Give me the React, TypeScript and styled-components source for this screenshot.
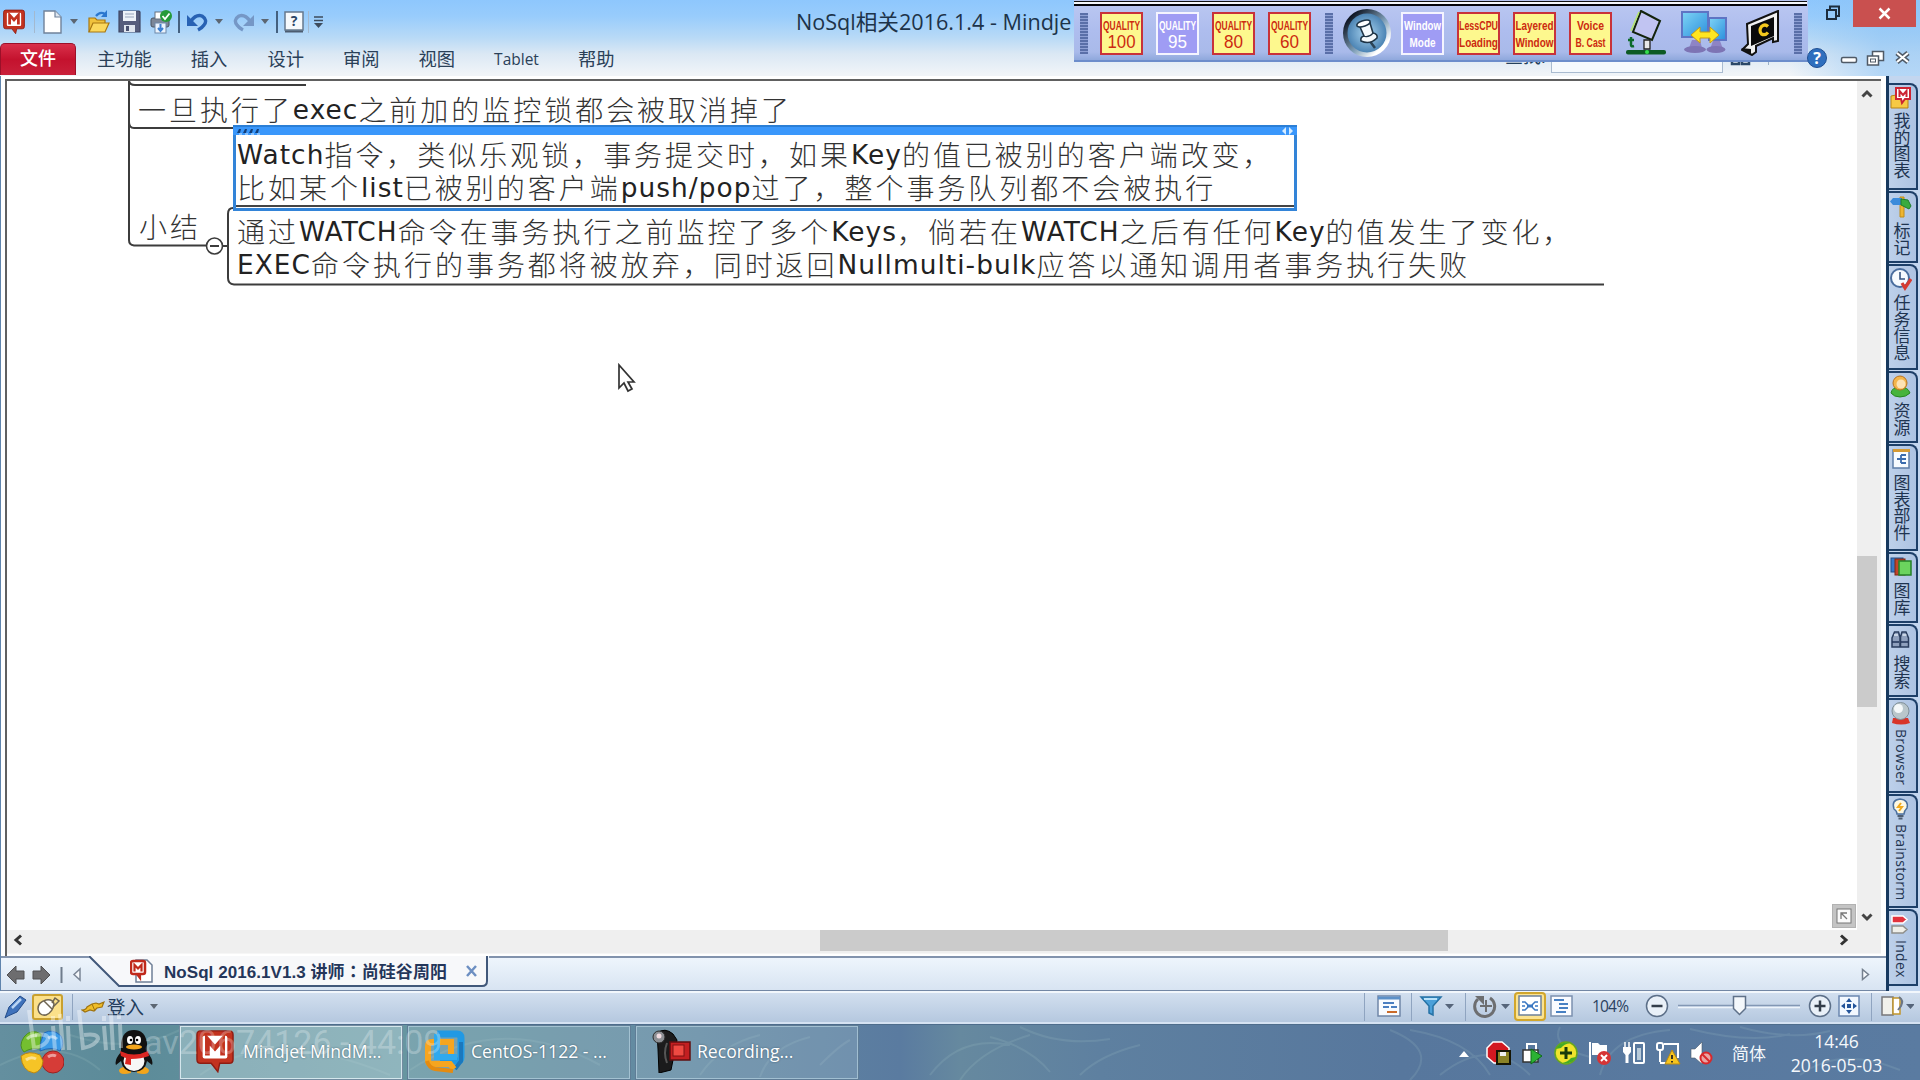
import React from "react";
import styled, { createGlobalStyle, css } from "styled-components";

const UI = `"Open Sans", "Noto Sans CJK SC", sans-serif`;

const Global = createGlobalStyle`
  * { box-sizing: border-box; }
  html, body { margin: 0; padding: 0; overflow: hidden; }
  body { font-family: ${UI}; background: #fff; }
  svg { display: block; flex: none; }
`;

const Screen = styled.div`
  position: relative;
  width: 1920px;
  height: 1080px;
  overflow: hidden;
  display: flex;
  flex-direction: column;
  background: #fff;
`;

/* ---------- header ---------- */
const Header = styled.header`
  height: 76px;
  flex: none;
  display: flex;
  flex-direction: column;
  background:
    linear-gradient(90deg, rgba(140, 195, 245, 0) 1790px, rgba(140, 195, 245, 0.6) 1880px),
    linear-gradient(#8ec7fd 0, #98ccfc 16px, #b9daf6 38px, #dbe8f4 54px, #f0f4f8 74px);
`;

const TitleRow = styled.div`
  height: 43px;
  flex: none;
  display: flex;
  align-items: center;
  padding-left: 3px;
`;

const QuickBar = styled.div`
  display: flex;
  align-items: center;
  height: 44px;
  width: 793px;
`;

const Gap = styled.span<{ $w: number }>`
  width: ${(p) => p.$w}px;
  flex: none;
`;

const VLine = styled.span<{ $c?: string; $h?: number; $w?: number }>`
  width: ${(p) => p.$w ?? 2}px;
  height: ${(p) => p.$h ?? 22}px;
  flex: none;
  background: ${(p) => p.$c ?? "#44607f"};
`;

const Caret = styled.span<{ $c?: string }>`
  width: 0;
  height: 0;
  flex: none;
  border: 4px solid transparent;
  border-top: 5px solid ${(p) => p.$c ?? "#5c6672"};
  border-bottom: 0;
`;

const WindowTitle = styled.div`
  width: 278px;
  overflow: hidden;
  font-size: 21.6px;
  line-height: 43px;
  color: #1d3349;
  white-space: nowrap;
`;

const RibbonRow = styled.nav`
  height: 32px;
  flex: none;
  display: flex;
  align-items: stretch;
`;

const FileTab = styled.div`
  width: 76px;
  border-radius: 5px 5px 0 0;
  border: 1px solid #9b1029;
  border-bottom: 0;
  background: linear-gradient(#d9304a, #c4122e 50%, #c9203a);
  color: #fff;
  font-weight: 500;
  font-size: 18px;
  line-height: 29px;
  text-align: center;
`;

const RibbonTab = styled.div<{ $left: number; $small?: boolean }>`
  margin-left: ${(p) => p.$left}px;
  font-size: ${(p) => (p.$small ? 15.5 : 18.3)}px;
  line-height: 32px;
  color: #2a4058;
  white-space: nowrap;
`;

const WindowKeys = styled.div`
  position: absolute;
  top: 0;
  right: 0;
  width: 113px;
  height: 76px;
`;

const CloseKey = styled.div`
  position: absolute;
  left: 46px;
  top: 0;
  width: 63px;
  height: 27px;
  background: #c9504f;
  display: flex;
  align-items: center;
  justify-content: center;
`;

const HiddenSearch = styled.div`
  position: absolute;
  left: 1505px;
  top: 44px;
  height: 29px;
  display: flex;
  align-items: flex-start;
  font-size: 18px;
  line-height: 24px;
  color: #24405c;
`;

const SearchInput = styled.div`
  margin-left: 5px;
  width: 172px;
  height: 29px;
  border: 1px solid #a9bbd0;
  background: #f5f9fd;
`;

/* ---------- recorder toolbar (floats over the header) ---------- */
const Recorder = styled.div`
  position: absolute;
  left: 1074px;
  top: 0;
  width: 734px;
  height: 62px;
  display: flex;
  align-items: center;
  padding: 6px 6px 0 6px;
  border-bottom: 2px solid #6c8dcb;
  background: linear-gradient(#b9c6f1 6px, #aebdee 30px, #a9baea 52px, #8fa8dc 60px);
`;

const RecorderEdge = styled.div`
  position: absolute;
  left: 0;
  top: 1px;
  width: 733px;
  height: 5px;
  background: #f4f6fb;
  border-top: 1px solid #111;
  border-bottom: 2px solid #06060c;
`;

const Grip = styled.div`
  width: 8px;
  height: 41px;
  flex: none;
  background: repeating-linear-gradient(#5a6fa8 0 2px, #8fa0d4 2px 3px);
`;

const Chip = styled.svg<{ $left: number }>`
  margin-left: ${(p) => p.$left}px;
`;

type ChipProps = { left?: number; top: string; bottom: string; on?: boolean; number?: boolean; w1?: number; w2?: number };
const LabelChip = ({ left = 13, top, bottom, on, number, w1 = 37, w2 = 30 }: ChipProps) => {
  const ink = on ? "#fff" : "#cc2a10";
  return (
    <Chip $left={left} width="43" height="43" viewBox="0 0 43 43">
      <rect x="1" y="1" width="41" height="41" fill={on ? "#9f9cf4" : "#fdf88e"} stroke={on ? "#f4f4ff" : "#c8323a"} strokeWidth="2" />
      <text x="21.5" y="17.500" textAnchor="middle" textLength={w1} lengthAdjust="spacingAndGlyphs" fontFamily="Liberation Sans Narrow, Liberation Sans, sans-serif" fontWeight="700" fontSize="12.500" fill={ink}>{top}</text>
      {number ? (
        <text x="21.5" y="36" textAnchor="middle" textLength={w2} lengthAdjust="spacingAndGlyphs" fontFamily="Liberation Sans, sans-serif" fontSize="19" fill={ink}>{bottom}</text>
      ) : (
        <text x="21.5" y="34.500" textAnchor="middle" textLength={w2} lengthAdjust="spacingAndGlyphs" fontFamily="Liberation Sans Narrow, Liberation Sans, sans-serif" fontWeight="700" fontSize="12.500" fill={ink}>{bottom}</text>
      )}
    </Chip>
  );
};

/* ---------- middle area ---------- */
const Middle = styled.div`
  height: 915px;
  flex: none;
  display: flex;
`;

const DocArea = styled.div`
  width: 1886px;
  flex: none;
  display: flex;
  flex-direction: column;
  border-left: 1px solid #5f84ad;
`;

const Pane = styled.div`
  height: 877px;
  margin-top: 3px;
  margin-left: 4px;
  width: 1876px;
  flex: none;
  display: grid;
  grid-template-columns: 1850px 24px;
  grid-template-rows: 849px 24px;
  border-left: 2px solid #606060;
  border-top: 2px solid #606060;
`;

const Canvas = styled.main`
  position: relative;
  overflow: hidden;
  background: #fff;
`;

const CanvasLines = styled.svg`
  position: absolute;
  left: -7px;
  top: -81px;
`;

const VScroll = styled.div`
  background: #efefef;
  display: flex;
  flex-direction: column;
  align-items: center;
  padding: 8px 4px 8px 0;
`;

const VThumb = styled.div`
  width: 20px;
  height: 151px;
  margin: 457px 0 auto;
  flex: none;
  background: #cbcbcb;
`;

const HScroll = styled.div`
  grid-column: 1 / 3;
  background: #efefef;
  display: flex;
  align-items: flex-start;
  border-bottom: 1px solid #f6f6f6;
`;

const HThumb = styled.div`
  width: 628px;
  height: 21px;
  margin-left: 791px;
  background: #cbcbcb;
`;

const Topic = styled.div<{ $x: number; $y: number }>`
  position: absolute;
  left: ${(p) => p.$x - 7}px;
  top: ${(p) => p.$y - 81}px;
`;

const TopicLine = styled.div`
  height: 33.3px;
  line-height: 33.3px;
  display: flex;
  align-items: center;
  white-space: nowrap;
  color: #222;
`;

const Latin = styled.span`
  font-family: "DejaVu Sans", sans-serif;
  font-size: 26.4px;
  letter-spacing: 1.05px;
`;

const Han = styled.span`
  font-family: "Noto Sans CJK SC", sans-serif;
  font-weight: 300;
  font-size: 28px;
  letter-spacing: 2.97px;
  color: #333;
`;

const Line = ({ text }: { text: string }) => (
  <TopicLine>
    {(text.match(/[\x20-\x7e]+|[^\x20-\x7e]+/g) ?? []).map((run, i) =>
      /[\x20-\x7e]/.test(run) ? <Latin key={i}>{run}</Latin> : <Han key={i}>{run}</Han>
    )}
  </TopicLine>
);

const Selection = styled.div`
  position: absolute;
  left: 226px;
  top: 44px;
  width: 1064px;
  height: 86px;
  border: 3px solid #3384d8;
  border-top: 0;
  background: #fff;
`;

const SelectionBar = styled.div`
  height: 10px;
  margin: 0 -3px;
  background: #3a97fb;
  border-top: 2px solid #2b7fd6;
  display: flex;
  justify-content: space-between;
  align-items: center;
  padding: 0 3px;
`;

const SelectionRule = styled.div`
  position: absolute;
  left: 0;
  right: 0;
  bottom: 1px;
  height: 2px;
  background: #444;
`;

const CornerKey = styled.div`
  position: absolute;
  right: 1px;
  bottom: 2px;
  width: 24px;
  height: 24px;
  background: #c4c4c4;
  border: 1px solid #b2b2b2;
  display: flex;
  align-items: center;
  justify-content: center;
`;

const DocTabs = styled.div`
  height: 35px;
  flex: none;
  display: flex;
  align-items: flex-start;
  border-bottom: 1px solid #7387a4;
  background: linear-gradient(#eff6fd, #d8e4f2);
  position: relative;
`;

const DocTabNav = styled.div`
  width: 88px;
  height: 35px;
  flex: none;
  display: flex;
  align-items: center;
  padding-left: 5px;
  border-top: 2px solid #8293ad;
`;

const DocTab = styled.div`
  position: relative;
  width: 400px;
  height: 33px;
  flex: none;
  display: flex;
  align-items: center;
  padding: 0 0 4px 41px;
`;

const DocTabShape = styled.svg`
  position: absolute;
  left: 0;
  top: 0;
`;

const DocTabLabel = styled.span`
  position: relative;
  margin-left: 11px;
  width: 289px;
  white-space: nowrap;
  font-family: "Liberation Sans", "Noto Sans CJK SC", sans-serif;
  font-weight: 700;
  font-size: 17px;
  letter-spacing: 0.06px;
  color: #24365a;
`;

const CentredColon = styled.span`
  font-family: "Noto Sans CJK TC", sans-serif;
`;

const Over = styled.span`
  position: relative;
  display: flex;
`;

const DocTabRest = styled.div`
  flex: 1;
  height: 35px;
  display: flex;
  align-items: center;
  justify-content: flex-end;
  padding-right: 16px;
  border-top: 2px solid #8293ad;
`;

/* ---------- side rail ---------- */
const Rail = styled.aside`
  width: 34px;
  flex: none;
  display: flex;
  flex-direction: column;
  padding-top: 7px;
  border-left: 3px solid #17395f;
  background: #c3d6ef;
`;

const RailTab = styled.div<{ $h: number; $space: number }>`
  width: 29px;
  height: ${(p) => p.$h}px;
  margin-bottom: 1px;
  flex: none;
  display: flex;
  flex-direction: column;
  align-items: center;
  gap: ${(p) => p.$space}px;
  padding: 2px 3px 0 0;
  border: 2px solid #1d3f68;
  border-left: 0;
  border-top-right-radius: 8px 8px;
  background: linear-gradient(90deg, #bdd0ea, #adc3e2);
`;

const RailLabel = styled.span<{ $latin?: boolean }>`
  writing-mode: vertical-rl;
  font-family: ${UI};
  white-space: nowrap;
  color: #1f3450;
  line-height: 18px;
  margin-right: 1px;
  ${(p) =>
    p.$latin
      ? css`
          font-size: 14px;
          font-weight: 500;
          letter-spacing: 0.3px;
        `
      : css`
          font-size: 17px;
          letter-spacing: -0.4px;
        `}
`;

/* ---------- status bar ---------- */
const StatusBar = styled.footer`
  height: 33px;
  flex: none;
  display: flex;
  align-items: center;
  border-top: 2px solid #f2f7fc;
  border-bottom: 2px solid #d5e2f2;
  background: linear-gradient(#d2dfef, #b5c8df);
  padding: 0 0 2px 4px;
`;

const StatusText = styled.span<{ $size: number }>`
  font-size: ${(p) => p.$size}px;
  line-height: 27px;
  color: #233c5c;
  white-space: nowrap;
`;

const PressedKey = styled.div<{ $w: number; $h: number }>`
  width: ${(p) => p.$w}px;
  height: ${(p) => p.$h}px;
  flex: none;
  display: flex;
  align-items: center;
  justify-content: center;
  border: 2px solid #c9a02e;
  border-radius: 3px;
  background: #fbe08a;
`;

const Fill = styled.span`
  flex: 1;
`;

/* ---------- taskbar ---------- */
const Taskbar = styled.div`
  position: relative;
  height: 56px;
  flex: none;
  display: flex;
  align-items: stretch;
  border-top: 1px solid #4e6d8c;
  background: linear-gradient(90deg, #648f9f 0, #5c8b99 120px, #6796a0 400px, #6288a2 700px, #5a7ba0 900px, #66899f 960px, #5e80a0 1100px, #57779d 1400px, #5a7ba1 1920px);
`;

const Wallpaper = styled.svg`
  position: absolute;
  left: 0;
  top: 0;
`;

const Launchers = styled.div`
  position: relative;
  width: 179px;
  display: flex;
  align-items: center;
  padding-left: 20px;
  gap: 51px;
  padding-bottom: 2px;
`;

const TaskKey = styled.div<{ $active?: boolean }>`
  position: relative;
  width: 224px;
  margin-right: 4px;
  flex: none;
  display: flex;
  align-items: center;
  padding: 0 0 3px 15px;
  gap: ${(p) => (p.$active ? 9 : 6)}px;
  border: 2px solid ${(p) => (p.$active ? "rgba(225,240,244,.85)" : "rgba(178,206,220,.75)")};
  outline: 1px solid rgba(50, 80, 110, 0.6);
  outline-offset: -1px;
  background: ${(p) => (p.$active ? "rgba(200,225,228,.42)" : "rgba(190,215,225,.22)")};
  color: #fff;
  font-size: 17.6px;
  white-space: nowrap;
  text-shadow: 0 0 2px rgba(30, 60, 80, 0.7);
`;

const Tray = styled.div`
  position: relative;
  flex: 1;
  display: flex;
  align-items: center;
  justify-content: flex-end;
  padding: 0 36px 0 0;
  color: #f4f8fb;
`;

const Ime = styled.span`
  margin-left: 19px;
  width: 36px;
  font-size: 17px;
  white-space: nowrap;
`;

const Clock = styled.div`
  margin-left: 21px;
  width: 95px;
  text-align: center;
  font-size: 17.5px;
  line-height: 24px;
  white-space: nowrap;
`;

const Watermark = styled.div`
  position: absolute;
  left: 26px;
  top: 1006px;
  display: flex;
  align-items: flex-start;
  gap: 17px;
  color: rgba(255, 255, 255, 0.27);
  font-family: Roboto, sans-serif;
  font-size: 34px;
  line-height: 72px;
  height: 74px;
  white-space: nowrap;
`;

/* ---------- icon drawings ---------- */
const AppLogo = ({ s = 22 }: { s?: number }) => (
  <svg width={s} height={s * 1.15} viewBox="0 0 40 46">
    <path d="M5 2h30q4 0 4 4v26q0 4-4 4H25l-2 9-7-9H5q-4 0-4-4V6q0-4 4-4z" fill="#c2321f" stroke="#8e1c12" strokeWidth="1.5" />
    <rect x="7" y="7" width="26" height="24" rx="2" fill="#fff" />
    <path d="M12 28V11l8 9 8-9v17" fill="none" stroke="#c2321f" strokeWidth="5" />
  </svg>
);
const PageIcon = () => (
  <svg width="19" height="24" viewBox="0 0 19 24"><path d="M1 1h11l6 6v16H1z" fill="#fff" stroke="#70829a" strokeWidth="1.4" /><path d="M12 1v6h6" fill="#dfe7f0" stroke="#70829a" strokeWidth="1.2" /></svg>
);
const OpenIcon = () => (
  <svg width="22" height="23" viewBox="0 0 22 23"><path d="M1 22V8h6l2 2h8v4" fill="#f0c23c" stroke="#a87712" strokeWidth="1.2" /><path d="M1 22l4-9h16l-4 9z" fill="#fbd85d" stroke="#a87712" strokeWidth="1.2" /><path d="M8 6q4-5 9-2" fill="none" stroke="#2b77cf" strokeWidth="2.2" /><path d="M19 0v7h-6z" fill="#2b77cf" /></svg>
);
const SaveIcon = () => (
  <svg width="23" height="23" viewBox="0 0 23 23"><path d="M1 1h20l1 1v20H1z" fill="#565d7c" stroke="#3f4664" strokeWidth="1.2" /><rect x="5" y="1" width="13" height="10" fill="#eef2f8" /><path d="M7 4h9M7 7h9" stroke="#9aa6bc" /><rect x="6" y="15" width="11" height="7" fill="#dfe5ee" /><rect x="8" y="16" width="3" height="5" fill="#4b5270" /></svg>
);
const PrintIcon = () => (
  <svg width="22" height="24" viewBox="0 0 22 24"><rect x="1" y="8" width="18" height="9" rx="2" fill="#7c8798" stroke="#4b5462" /><rect x="5" y="2" width="9" height="7" fill="#fff" stroke="#66707f" /><rect x="5" y="13" width="11" height="10" fill="#eaf3fd" stroke="#6c87a8" /><path d="M10.500 14v5M8 18l2.500 3 2.500-3" stroke="#3c7fd0" strokeWidth="2" fill="none" /><circle cx="16" cy="6" r="6" fill="#259a3a" /><path d="M12.500 6l2.500 3 4.500-5.500" fill="none" stroke="#fff" strokeWidth="1.800" /></svg>
);
const UndoIcon = ({ flip, c }: { flip?: boolean; c: string }) => (
  <svg width="21" height="20" viewBox="0 0 21 20"><g transform={flip ? "translate(21 0) scale(-1 1)" : undefined}><path d="M4 9q5-7 11-5 6 4 2 9-2 3-6 5" fill="none" stroke={c} strokeWidth="3.400" /><path d="M0 3v11h11z" fill={c} /></g></svg>
);
const HelpBox = () => (
  <svg width="20" height="22" viewBox="0 0 20 22"><rect x="1" y="1" width="18" height="18" fill="#f6f9fc" stroke="#66788d" strokeWidth="1.500" /><path d="M1 20.500h18" stroke="#4c5c70" strokeWidth="2" /><text x="10" y="15" textAnchor="middle" fontFamily="Open Sans, sans-serif" fontSize="14" fontWeight="700" fill="#2b4566">?</text></svg>
);
const Pin = () => (
  <Chip $left={9} width="50" height="50" viewBox="0 0 50 50">
    <defs><linearGradient id="ring" x1="0" y1="0" x2="1" y2="1"><stop offset="0.150" stopColor="#0b1220" /><stop offset="0.550" stopColor="#7f9fb8" /><stop offset="0.800" stopColor="#fff" /></linearGradient><radialGradient id="ball"><stop offset="0" stopColor="#a9d4f0" /><stop offset="1" stopColor="#4c84b4" /></radialGradient></defs>
    <circle cx="25" cy="25" r="24" fill="url(#ring)" /><circle cx="25" cy="25" r="19.500" fill="url(#ball)" />
    <path d="M27 32l6 8" stroke="#2b4356" strokeWidth="2.500" />
    <path d="M18 19l10-4 3 10q5 1 4 5-7 7-16 3-1-4 3-5z" fill="#f5fafd" stroke="#1e3446" strokeWidth="1.600" />
    <path d="M15 18q-1-3 5-5 6-2 8 0 1 3-5 5-6 2-8 0z" fill="#fff" stroke="#1e3446" strokeWidth="1.600" />
    <path d="M21 28q6 2 10-3" fill="none" stroke="#1e3446" strokeWidth="1.300" />
  </Chip>
);
const ArmIcon = () => (
  <Chip $left={14} width="41" height="46" viewBox="0 0 41 46"><path d="M15 1l19 10-8 19-19-8z" fill="#c1c4f2" stroke="#14240c" strokeWidth="2" /><path d="M13 2L5 21" stroke="#b6e86a" strokeWidth="1.500" /><path d="M18 30h6v9h-6z" fill="#e8e8e8" stroke="#222" strokeWidth="1.300" /><rect x="0" y="40" width="40" height="4.500" rx="2" fill="#0d5a24" /><path d="M5 27v8q0 2 3 1M2 30h6" stroke="#0c6a2a" strokeWidth="2.500" fill="none" /><circle cx="21" cy="42" r="2" fill="#33e04c" /></Chip>
);
const NetIcon = () => (
  <Chip $left={14} width="46" height="44" viewBox="0 0 46 44"><defs><linearGradient id="scr" x1="0" y1="0" x2="1" y2="1"><stop offset="0" stopColor="#7fd4f6" /><stop offset="1" stopColor="#2b8fdc" /></linearGradient></defs><rect x="1" y="1" width="26" height="25" fill="url(#scr)" stroke="#5e74c4" strokeWidth="2" /><rect x="28" y="7" width="17" height="22" fill="url(#scr)" stroke="#5e74c4" strokeWidth="2" /><path d="M11 29h8l2 8H8zM32 30h7l3 8H29z" fill="#8e84c4" /><ellipse cx="14" cy="38.500" rx="11" ry="3.500" fill="#7d74b4" /><ellipse cx="35" cy="38.500" rx="9.500" ry="3.500" fill="#7d74b4" /><path d="M10 24l9-8v5h10v-5l9 8-9 8v-5H19v5z" fill="#ffe622" stroke="#c69a14" /></Chip>
);
const BoardIcon = () => (
  <Chip $left={14} width="39" height="46" viewBox="0 0 39 46"><path d="M6 14L37 1v30l-5 1v-4L15 36v6l-4 3-10-5 6-6z" fill="#f1f1f1" stroke="#111" strokeWidth="2" /><path d="M10 16l23-9v19l-23 10z" fill="#0a0a0a" /><path d="M0 38l10 7v-6z" fill="#111" /><path d="M27 16.500q-3-3-6.500 0-3 4 0 7.500 3.500 2 6.500-1.500" fill="none" stroke="#f4c81d" strokeWidth="3.200" /></Chip>
);
const MiniIcon = ({ kind }: { kind: string }) => {
  const body: Record<string, React.ReactNode> = {
    maps: <><path d="M1 21V9l5-1 2 2h10v11z" fill="#f6c944" stroke="#b98314" /><path d="M6 1h14v11h-5l-3 4-1-4H6z" fill="#fff" stroke="#cc2433" strokeWidth="2" /><path d="M9.500 10V4l3.500 4 3.500-4v6" fill="none" stroke="#cc2433" strokeWidth="2" /></>,
    sign: <><path d="M10 2h4v20h-4z" fill="#eeb530" stroke="#c08c18" /><path d="M3 3h9v7H3L0 6.500z" fill="#3b8bdb" /><path d="M11 4l7 1 3 6-2 3-8-4z" fill="#39ab3e" stroke="#1f7d2a" /></>,
    clock: <><circle cx="10" cy="10" r="9" fill="#f7fbff" stroke="#496d9e" strokeWidth="2" /><path d="M10 4v7h5" fill="none" stroke="#385682" strokeWidth="1.600" /><path d="M12 15l3 5 6-9" fill="none" stroke="#d63b32" strokeWidth="3.200" /></>,
    person: <><path d="M1 18q1-6 9-6t10 6q-4 4-10 4T1 18z" fill="#47b43c" stroke="#25861f" /><circle cx="10" cy="8" r="7" fill="#f3b64c" stroke="#b87320" /><circle cx="11" cy="9" r="4.500" fill="#fde3b4" /></>,
    parts: <><rect x="3" y="2" width="16" height="18" fill="#f7fbff" stroke="#5d7da8" strokeWidth="1.500" /><path d="M3 2.500h17" stroke="#d59a35" strokeWidth="3" /><path d="M7 11h4M11 7v8M11 7h5M11 11h5M11 15h5" stroke="#3b6cae" strokeWidth="1.800" /></>,
    library: <><rect x="1" y="2" width="12" height="14" fill="#3678c7" stroke="#1f4c8b" /><rect x="5" y="3" width="10" height="16" fill="#c3452b" stroke="#7c2615" /><rect x="9" y="5" width="12" height="14" fill="#6bd45e" stroke="#258029" strokeWidth="1.500" /></>,
    find: <><path d="M4.500 4h4l1.500 5v10H2v-9zM12 4h4l2.500 6v9h-8V9z" fill="#8fa0bd" stroke="#2a3d5e" strokeWidth="1.500" /><path d="M2 14h7M11 14h7" stroke="#22355a" strokeWidth="1.500" /><path d="M4 7h4M12.500 7h4" stroke="#dde6f2" strokeWidth="1.500" /></>,
    globe: <><path d="M3 16h15l2 5q-9 3-18 0z" fill="#d8352a" /><circle cx="10.500" cy="9" r="8.500" fill="#b9c6cb" stroke="#7f8f98" /><circle cx="8.500" cy="6.500" r="4.500" fill="#f4f8f9" /></>,
    bulb: <><path d="M7 16q0-3-3-5-3-9 6-10 9 1 7 9-3 3-3 6z" fill="#fdf8e2" stroke="#4a6f9e" strokeWidth="1.500" /><path d="M11 5L8 9h4l-3 4" fill="none" stroke="#f1a91d" strokeWidth="2" /><path d="M7.500 18h6M8.500 20.500h4" stroke="#4e5e73" strokeWidth="2" /></>,
    index: <><path d="M2 3h11l4 3.500-4 3.500H2z" fill="#e2323d" stroke="#fff" strokeWidth="1.500" /><path d="M2 13h11l4 3.500-4 3.500H2z" fill="#efefe9" stroke="#8f8f8b" strokeWidth="1.500" /></>,
  };
  return <svg width="22" height="23" viewBox="0 0 22 23">{body[kind]}</svg>;
};

const railTabs = [
  { k: "maps", t: "我的图表", h: 107, s: 5 },
  { k: "sign", t: "标记", h: 72, s: 7 },
  { k: "clock", t: "任务信息", h: 106, s: 6 },
  { k: "person", t: "资源", h: 72, s: 7 },
  { k: "parts", t: "图表部件", h: 107, s: 6 },
  { k: "library", t: "图库", h: 71, s: 6 },
  { k: "find", t: "搜索", h: 73, s: 7 },
  { k: "globe", t: "Browser", h: 95, s: 7, latin: true },
  { k: "bulb", t: "Brainstorm", h: 114, s: 6, latin: true },
  { k: "index", t: "Index", h: 77, s: 7, latin: true },
];

const TrayIcons = () => (
  <svg width="255" height="26" viewBox="1458 1040 255 26">
    <path d="M1459 1057l5-6 5 6z" fill="#fff" />
    <path d="M1493 1042h9l7 6v9l-6 6h-9l-7-6v-9z" fill="#d31921" stroke="#fff" strokeWidth="1.500" /><rect x="1497" y="1051" width="13" height="13" fill="#8a8226" stroke="#151505" strokeWidth="2" /><path d="M1500 1052h6v4h-6z" fill="#eee" />
    <path d="M1527 1044h9v8h-9z" fill="none" stroke="#fff" strokeWidth="2" /><rect x="1523" y="1050" width="15" height="12" fill="#fff" stroke="#333" strokeWidth="1.500" /><path d="M1531 1049l11 7-11 8z" fill="#2bb233" stroke="#0e6b17" />
    <circle cx="1566" cy="1053" r="11" fill="#f0e32c" stroke="#67a61d" strokeWidth="1.500" /><path d="M1556 1049q4-8 14-6-6 1-9 5zM1576 1057q-4 8-14 6 6-1 9-5z" fill="#43ab25" /><path d="M1566 1047v12M1560 1053h12" stroke="#193b0a" strokeWidth="3" />
    <path d="M1590 1042v22" stroke="#fff" strokeWidth="2" /><path d="M1592 1043h6l2 2h7v10h-15z" fill="#fff" /><circle cx="1604" cy="1058" r="7" fill="#d63435" /><path d="M1601 1055l6 6M1607 1055l-6 6" stroke="#fff" strokeWidth="2" />
    <rect x="1634" y="1043" width="10" height="20" rx="1" fill="none" stroke="#fff" strokeWidth="2" /><path d="M1637 1048h4v12h-4z" fill="#b9cbd9" /><path d="M1623 1047h8v5l-2.500 3v8h-3v-8l-2.500-3z" fill="#fff" /><path d="M1625 1042v5M1629 1042v5" stroke="#fff" strokeWidth="1.500" />
    <path d="M1664 1044h14v14M1660 1063h10" fill="none" stroke="#fff" strokeWidth="2" /><rect x="1657" y="1043" width="6" height="7" rx="2" fill="none" stroke="#fff" strokeWidth="2" /><path d="M1660 1050v12" stroke="#fff" strokeWidth="2" /><path d="M1672 1050l8 14h-15z" fill="#f7c51f" stroke="#b98912" /><path d="M1672 1055v4M1672 1061v1.500" stroke="#222" strokeWidth="1.800" />
    <path d="M1691 1049h4l7-7v22l-7-6h-4z" fill="#fff" stroke="#4d5d6c" strokeWidth=".6" /><circle cx="1706" cy="1058" r="5.500" fill="#e9a5a5" stroke="#d8292c" strokeWidth="2" /><path d="M1702 1054l8 8" stroke="#d8292c" strokeWidth="2" />
  </svg>
);

const StatusTools = () => (
  <svg width="550" height="29" viewBox="1364 993 550 29" fontFamily="Open Sans, sans-serif">
    <path d="M1364.500 994v28M1411.500 994v28M1465.500 994v28M1871.500 994v28" stroke="#8fa4c0" />
    <rect x="1378" y="997" width="22" height="20" fill="#f8fbff" stroke="#7087a8" strokeWidth="1.500" /><path d="M1378 999h22" stroke="#5c90c8" strokeWidth="3" /><path d="M1383 1004h11M1383 1008h6M1391 1008h6" stroke="#4b7fc1" strokeWidth="2" /><path d="M1387 1013h10" stroke="#ca6b2b" strokeWidth="2" />
    <path d="M1421 998h20l-8 9v9l-4-2v-7z" fill="#4ba0d9" stroke="#2672a5" strokeWidth="1.500" /><path d="M1424 1000h13" stroke="#b9e2fa" strokeWidth="2" />
    <path d="M1445 1005h9l-4.500 5zM1501 1005h9l-4.500 5zM1906 1005h9l-4.500 5z" fill="#56657a" />
    <path d="M1478 1000a10 10 0 1 0 12-1" fill="none" stroke="#6d6e70" strokeWidth="3" /><path d="M1475 997h9v9z" fill="#6d6e70" /><path d="M1486 1001v12M1480 1007h12" stroke="#6d6e70" strokeWidth="2" />
    <rect x="1515" y="994" width="30" height="27" rx="3" fill="#fbe391" stroke="#d1a62c" strokeWidth="2" /><rect x="1519" y="997" width="22" height="19" fill="#fff" stroke="#6d8199" strokeWidth="1.500" /><path d="M1522 1003h3l3 3M1538 1003h-3l-3 3M1522 1011h3l3-3M1538 1011h-3l-3-3M1522 1007h3M1535 1007h3" fill="none" stroke="#3b78c2" strokeWidth="1.500" /><path d="M1527 1007h6" stroke="#3b78c2" strokeWidth="3" />
    <rect x="1551" y="997" width="21" height="20" fill="#f9fbff" stroke="#7b90af" strokeWidth="1.500" /><path d="M1554 1001h10M1559 1005h9M1559 1009h9M1556 1013h10" stroke="#4780c3" strokeWidth="2" />
    <text x="1592" y="1013" fontSize="15.500" textLength="37" fill="#2a4160">104%</text>
    <circle cx="1657" cy="1007" r="10.500" fill="#e9f0f8" stroke="#5c6f88" strokeWidth="1.500" /><path d="M1651.500 1007h11" stroke="#333d4a" strokeWidth="2.500" />
    <path d="M1678 1006.500h122" stroke="#8297b4" strokeWidth="1.500" /><path d="M1678 1008.500h122" stroke="#edf4fb" strokeWidth="1.500" />
    <path d="M1733.500 997.500h12v12l-6 6-6-6z" fill="#f3f7fb" stroke="#5f7189" strokeWidth="1.500" />
    <circle cx="1820" cy="1007" r="10.500" fill="#e9f0f8" stroke="#5c6f88" strokeWidth="1.500" /><path d="M1814.500 1007h11M1820 1001.500v11" stroke="#333d4a" strokeWidth="2.500" />
    <rect x="1839" y="997" width="20" height="20" fill="#f3f8ff" stroke="#6b87b0" strokeWidth="1.500" /><path d="M1849 999l3 4h-6zM1849 1015l3-4h-6zM1841 1007l4-3v6zM1857 1007l-4-3v6zM1847 1005h4v4h-4z" fill="#24549a" />
    <path d="M1882 998h11v18h-11z" fill="#f1f1ec" stroke="#77777a" strokeWidth="1.500" /><path d="M1893 999h7v16h-7z" fill="#fff" stroke="#c1952b" strokeWidth="1.500" /><path d="M1899 998q5 3 2 9l-3 4" fill="none" stroke="#6b7686" strokeWidth="2" />
  </svg>
);

export default function App() {
  return (
    <>
      <Global />
      <Screen>
        <Header>
          <TitleRow>
            <QuickBar>
              <AppLogo s={22} /><Gap $w={9} /><VLine $c="#a3b9cf" $w={1} /><Gap $w={8} />
              <PageIcon /><Gap $w={8} /><Caret /><Gap $w={10} />
              <OpenIcon /><Gap $w={8} /><SaveIcon /><Gap $w={9} /><PrintIcon /><Gap $w={6} />
              <VLine /><Gap $w={7} /><UndoIcon c="#2862b4" /><Gap $w={7} /><Caret /><Gap $w={10} />
              <UndoIcon flip c="#7597c6" /><Gap $w={7} /><Caret /><Gap $w={7} />
              <VLine /><Gap $w={6} /><HelpBox /><Gap $w={4} /><VLine $c="#a3b9cf" $w={1} /><Gap $w={5} />
              <svg width="9" height="12" viewBox="0 0 9 12"><path d="M0 1h9M0 4.500h9" stroke="#3d4b5c" strokeWidth="1.500" /><path d="M0 7h9l-4.500 5z" fill="#3d4b5c" /></svg>
            </QuickBar>
            <WindowTitle>NoSql相关2016.1.4 - Mindje</WindowTitle>
          </TitleRow>
          <RibbonRow>
            <FileTab>文件</FileTab>
            <RibbonTab $left={21}>主功能</RibbonTab>
            <RibbonTab $left={39}>插入</RibbonTab>
            <RibbonTab $left={40}>设计</RibbonTab>
            <RibbonTab $left={39}>审阅</RibbonTab>
            <RibbonTab $left={39}>视图</RibbonTab>
            <RibbonTab $left={39} $small>Tablet</RibbonTab>
            <RibbonTab $left={39}>帮助</RibbonTab>
          </RibbonRow>
        </Header>

        <Middle>
          <DocArea>
            <Pane>
              <Canvas>
                <CanvasLines width="1850" height="930" viewBox="0 0 1850 930" fill="none" stroke="#3c3c3c" strokeWidth="2">
                  <path d="M129 78v162q0 5 5 5.500h72M129 80q0 5 6 5h171M129 122q0 6 5 6h100" />
                  <path d="M223 246h5M233 208q-5 0-5 6v64q0 6 6 6.500h1370" />
                  <circle cx="214.500" cy="246" r="8" fill="#fff" strokeWidth="1.600" />
                  <path d="M210 246h9" />
                </CanvasLines>
                <Topic $x={138} $y={93}><Line text="一旦执行了exec之前加的监控锁都会被取消掉了" /></Topic>
                <Topic $x={139} $y={210}><Line text="小结" /></Topic>
                <Topic $x={237} $y={215}>
                  <Line text="通过WATCH命令在事务执行之前监控了多个Keys，倘若在WATCH之后有任何Key的值发生了变化，" />
                  <Line text="EXEC命令执行的事务都将被放弃，同时返回Nullmulti-bulk应答以通知调用者事务执行失败" />
                </Topic>
                <Selection>
                  <SelectionBar>
                    <svg width="24" height="7" viewBox="0 0 24 7"><path d="M1 5l2-4h2l-1 4zM7 5l2-4h2l-1 4zM13 5l2-4h2l-1 4zM19 5l2-4h2l-1 4z" fill="#123f7a" /><path d="M3 6h3M9 6h3M15 6h3M21 6h3" stroke="#d5eaff" /></svg>
                    <svg width="13" height="8" viewBox="0 0 13 8"><path d="M5 0v8L1 4zM8 0v8l4-4z" fill="#d6ecff" /></svg>
                  </SelectionBar>
                  <SelectionRule />
                </Selection>
                <Topic $x={237} $y={137.5}>
                  <Line text="Watch指令，类似乐观锁，事务提交时，如果Key的值已被别的客户端改变，" />
                  <Line text="比如某个list已被别的客户端push/pop过了，整个事务队列都不会被执行" />
                </Topic>
                <Topic $x={617} $y={363}>
                  <svg width="20" height="30" viewBox="0 0 20 30"><path d="M2 2v23l5-5 4 8 4-2-4-7h6z" fill="#fff" stroke="#333" strokeWidth="1.700" /></svg>
                </Topic>
                <CornerKey>
                  <svg width="16" height="16" viewBox="0 0 16 16"><rect x="1" y="1" width="14" height="14" fill="#fafafa" stroke="#777" /><path d="M5 11V5h6M5 5l6 6" fill="none" stroke="#777" strokeWidth="1.300" /></svg>
                </CornerKey>
              </Canvas>
              <VScroll>
                <svg width="12" height="10" viewBox="0 0 12 10"><path d="M1.500 7.500L6 3l4.500 4.500" fill="none" stroke="#444" strokeWidth="3" /></svg>
                <VThumb />
                <svg width="12" height="10" viewBox="0 0 12 10"><path d="M1.500 2.500L6 7l4.500-4.500" fill="none" stroke="#444" strokeWidth="3" /></svg>
              </VScroll>
              <HScroll>
                <Gap $w={5} />
                <svg width="12" height="20" viewBox="0 0 12 20"><path d="M9 5.500L4 10l5 4.500" fill="none" stroke="#333" strokeWidth="3" /></svg>
                <Gap $w={5} />
                <HThumb />
                <Gap $w={390} />
                <svg width="12" height="20" viewBox="0 0 12 20"><path d="M3 5.500L8 10l-5 4.500" fill="none" stroke="#333" strokeWidth="3" /></svg>
              </HScroll>
            </Pane>
            <DocTabs>
              <DocTabNav>
                <svg width="78" height="20" viewBox="0 0 78 20">
                  <path d="M1 10l9-9v5h8v8h-8v5zM44 10l-9-9v5h-8v8h8v5z" fill="#6d6d6f" stroke="#505052" />
                  <path d="M55.500 2v16" stroke="#6f7c8c" strokeWidth="2" /><path d="M74 4v11l-6-5.500z" fill="#f5f8fc" stroke="#7b8696" strokeWidth="1.500" />
                </svg>
              </DocTabNav>
              <DocTab>
                <DocTabShape width="400" height="33" viewBox="0 0 400 33"><path d="M0 0l30 30h363q5 0 5-5V0z" fill="#f7f8fa" /><path d="M0 0l30 30h363q5 0 5-5V0" fill="none" stroke="#41587a" strokeWidth="2" /></DocTabShape>
                <Over><svg width="23" height="24" viewBox="0 0 23 24"><path d="M6 1h11l5 5v17H6z" fill="#fff" stroke="#6f7f97" strokeWidth="1.500" /><rect x="1" y="2" width="14" height="13" rx="2" fill="#fff" stroke="#c02a1c" strokeWidth="2.500" /><path d="M4.500 12.500V6L8 9.500 11.500 6v6.500M7 15l3 4v-4" fill="none" stroke="#c02a1c" strokeWidth="2.200" /></svg></Over>
                <DocTabLabel>NoSql 2016.1V1.3 讲师<CentredColon lang="zh-TW">：</CentredColon>尚硅谷周阳</DocTabLabel>
                <Over><Gap $w={13} /><svg width="11" height="12" viewBox="0 0 11 12"><path d="M1 1l9 10M10 1L1 11" stroke="#6d8fc2" strokeWidth="2.500" /></svg></Over>
              </DocTab>
              <DocTabRest><svg width="9" height="13" viewBox="0 0 9 13"><path d="M1.500 1.500v10l6-5z" fill="#f7fafd" stroke="#75808e" strokeWidth="1.500" /></svg></DocTabRest>
            </DocTabs>
          </DocArea>
          <Rail>
            {railTabs.map((r) => (
              <RailTab key={r.k} $h={r.h} $space={r.s - 3}>
                <MiniIcon kind={r.k} />
                <RailLabel $latin={r.latin}>{r.t}</RailLabel>
              </RailTab>
            ))}
          </Rail>
        </Middle>

        <StatusBar>
          <svg width="23" height="24" viewBox="0 0 23 24"><path d="M1 23l4-11L16 1l6 4-9 12-9 4z" fill="#3f72bb" stroke="#234c8a" /><path d="M8 13l9-9" stroke="#b8d4f4" strokeWidth="2.500" /></svg>
          <Gap $w={5} />
          <PressedKey $w={31} $h={26}><svg width="24" height="21" viewBox="0 0 24 21"><path d="M2 13q0-7 8-9 7-1 8 4-1 8-8 11-7 1-8-6z" fill="#fff" stroke="#6f6552" strokeWidth="1.500" /><path d="M16 7l3-5 4 3-6 6M8 5l8 8" fill="none" stroke="#6f6552" strokeWidth="1.500" /></svg></PressedKey>
          <Gap $w={9} /><VLine $c="#8fa4c0" $w={1} $h={26} /><Gap $w={8} />
          <svg width="24" height="16" viewBox="0 0 24 16"><path d="M1 11q4 0 5-3l5-3 4-1 3 1 5-2-2 5-5 1-3 3-4-1-5 2z" fill="#efbd29" stroke="#9f7311" strokeWidth="1.200" /><path d="M11 5l3 7" stroke="#9f7311" /></svg>
          <Gap $w={2} /><StatusText $size={18.5}>登入</StatusText><Gap $w={6} /><Caret />
          <Fill />
          <StatusTools />
          <Gap $w={6} />
        </StatusBar>

        <Taskbar>
          <Wallpaper width="1920" height="55" viewBox="0 0 1920 55" fill="none" stroke="#b5d6d2" strokeWidth="2" opacity=".14">
            <path d="M930 50q30-40 80-30M960 55q20-30 70-45M990 12q40 10 60 35M1020 2q40 20 90 12M1080 50q20-20 60-30M1390 5q50 20 20 50M1410 5q60 10 80 45M1440 50q50-40 90 0M1560 2q-10 20 30 30M1600 50q10-40 70-45M1690 4q60 15 100 5M1740 2q50 14 90 4M1800 50q40-30 100-5M700 50q20-30 60-40M760 52q10-30 50-40M820 40q20-20 30-25" />
            <path d="M0 40q60-30 100 5M70 10q60 20 110-5M200 50q70-50 190 0M410 45q90-60 190-5" />
          </Wallpaper>
          <Launchers>
            <svg width="44" height="44" viewBox="0 0 44 44">
              <path d="M21 4q-10-6-17 3-6 9 0 15 8-5 16-3z" fill="#74bf30" stroke="#4c8f1f" /><path d="M24 3q9-5 17 3 4 8-1 15-8-5-20 0 0-10 4-18z" fill="#3b9ae6" stroke="#2268b8" /><circle cx="33" cy="32" r="11" fill="#d63c37" stroke="#9b2222" /><path d="M1 26q8-6 19-1l3 6q-1 10-9 12Q2 41 1 26z" fill="#f6c426" stroke="#bd8710" />
              <path d="M7 9q5-5 10-3M28 8q5-3 9 1M28 27q4-3 8-1M6 30q5-4 10-1" stroke="#fff" strokeWidth="3" opacity=".5" fill="none" />
            </svg>
            <svg width="38" height="46" viewBox="0 0 38 46">
              <path d="M4 41q3-5 12-3v6q-12 3-12-3zM34 41q-3-5-12-3v6q12 3 12-3z" fill="#f3a51c" /><path d="M6 23q-7 8-5 13l5-4q2 11 13 11t13-11l5 4q2-5-5-13z" fill="#111" /><ellipse cx="19" cy="32" rx="10.500" ry="10" fill="#f7f7f7" /><path d="M6 24V14Q8 1 19 1t13 13v10q-13 6-26 0z" fill="#111" /><ellipse cx="15" cy="11" rx="3" ry="4" fill="#fff" /><ellipse cx="23" cy="11" rx="3" ry="4" fill="#fff" /><circle cx="16" cy="11" r="1.300" /><circle cx="22" cy="11" r="1.300" /><ellipse cx="19" cy="18" rx="8" ry="2.600" fill="#f3a51c" /><path d="M5 22q14 7 28 0l1 5q-8 3-18 3v6l-6-1 1-6-5-2z" fill="#dc2722" />
            </svg>
          </Launchers>
          <TaskKey $active><AppLogo s={38} />Mindjet MindM...</TaskKey>
          <TaskKey>
            <svg width="41" height="43" viewBox="0 0 41 43">
              <path d="M13 4h20q4 0 4 4v19q0 4-4 4H16" fill="none" stroke="#2199e4" strokeWidth="7" />
              <path d="M37 12v19l-6 8" fill="none" stroke="#1b78bd" strokeWidth="4" />
              <path d="M27 26V12H8q-4 0-4 4v14q0 4 4 4h18l4 5" fill="none" stroke="#f6a51f" strokeWidth="6" />
              <path d="M3 31q2 7 8 8l18 2" fill="none" stroke="#e58b10" strokeWidth="4" />
              <path d="M13 4v23h20" fill="none" stroke="#2fa9ee" strokeWidth="6" />
            </svg>
            CentOS-1122 - ...
          </TaskKey>
          <TaskKey>
            <svg width="39" height="44" viewBox="0 0 39 44"><path d="M5 4q8-6 16 1l4 6-6 30-12 3L6 20z" fill="#1b1b1c" stroke="#000" /><circle cx="7" cy="8" r="6" fill="#8c8f94" stroke="#2b2b2b" /><circle cx="7" cy="7" r="2.500" fill="#f1dce2" /><rect x="18" y="13" width="20" height="18" fill="#c31f21" stroke="#5f0f10" strokeWidth="1.500" /><rect x="21" y="16" width="11" height="11" fill="#ef4a42" stroke="#7d1212" /><path d="M15 14q-4 10 0 20" stroke="#555" strokeWidth="2" fill="none" /></svg>
            Recording...
          </TaskKey>
          <Tray>
            <TrayIcons />
            <Ime>简体</Ime>
            <Clock>14:46<br />2016-05-03</Clock>
          </Tray>
        </Taskbar>

        <HiddenSearch>查找:<SearchInput />
          <svg width="60" height="26" viewBox="0 0 60 26"><path d="M9 8v12h7V8zM19 8v12h7V8z" fill="none" stroke="#2b4868" strokeWidth="2.500" /><path d="M45.500 2v19" stroke="#9ab0c8" /></svg>
        </HiddenSearch>
        <Recorder>
          <RecorderEdge />
          <Grip />
          <LabelChip left={12} top="QUALITY" bottom="100" number w2={28} />
          <LabelChip on top="QUALITY" bottom="95" number w2={19} />
          <LabelChip top="QUALITY" bottom="80" number w2={19} />
          <LabelChip top="QUALITY" bottom="60" number w2={19} />
          <Gap $w={14} /><Grip />
          <Pin />
          <LabelChip left={9} on top="Window" bottom="Mode" w2={26} />
          <LabelChip top="LessCPU" bottom="Loading" w1={39} w2={39} />
          <LabelChip top="Layered" bottom="Window" w1={38} w2={38} />
          <LabelChip top="Voice" bottom="B. Cast" w1={27} w2={30} />
          <ArmIcon /><NetIcon /><BoardIcon />
          <Gap $w={14} /><Grip />
        </Recorder>
        <WindowKeys>
          <CloseKey><svg width="13" height="13" viewBox="0 0 13 13"><path d="M1.500 1.500l10 10M11.500 1.500l-10 10" stroke="#fff" strokeWidth="2.500" /></svg></CloseKey>
          <svg width="113" height="76" viewBox="1807 0 113 76">
            <path d="M1830 9V6.500h9V16h-3" fill="none" stroke="#1d2d3d" strokeWidth="2" /><rect x="1827" y="10" width="9" height="9" fill="none" stroke="#1d2d3d" strokeWidth="2" />
            <circle cx="1817" cy="58" r="9.500" fill="#2f6fbe" stroke="#1f4f93" /><text x="1817" y="64" textAnchor="middle" fontFamily="Open Sans, sans-serif" fontSize="16" fontWeight="700" fill="#fff">?</text>
            <rect x="1841.500" y="57.500" width="15" height="5" rx="1.500" fill="#fff" stroke="#4f5a66" strokeWidth="1.500" />
            <rect x="1872.500" y="51.500" width="11" height="9" fill="#fff" stroke="#4f5a66" strokeWidth="1.500" /><rect x="1867.500" y="56" width="11" height="9" fill="#fff" stroke="#4f5a66" strokeWidth="1.500" /><rect x="1870.500" y="59" width="5" height="3" fill="none" stroke="#4f5a66" />
            <path d="M1897 53l11 9M1908 53l-11 9" stroke="#4f5a66" strokeWidth="5" /><path d="M1897 53l11 9M1908 53l-11 9" stroke="#fff" strokeWidth="2.200" />
          </svg>
        </WindowKeys>
        <Watermark>
          <svg width="101" height="48" viewBox="0 0 101 48" fill="none" stroke="rgba(255,255,255,.38)" strokeWidth="4">
            <path d="M3 4l5 38q12-2 14-9 0-6-13-4M53 4l4 38q12-2 15-9 0-6-14-4" /><path d="M27 20l2 24M34 8l3 36M42 20l1 24M78 20l2 24M85 8l2 36M94 18l1 24M27 10v5M42 10v5M78 10v5M93 8v5" />
          </svg>
          av20674126 - 44:09
        </Watermark>
      </Screen>
    </>
  );
}
